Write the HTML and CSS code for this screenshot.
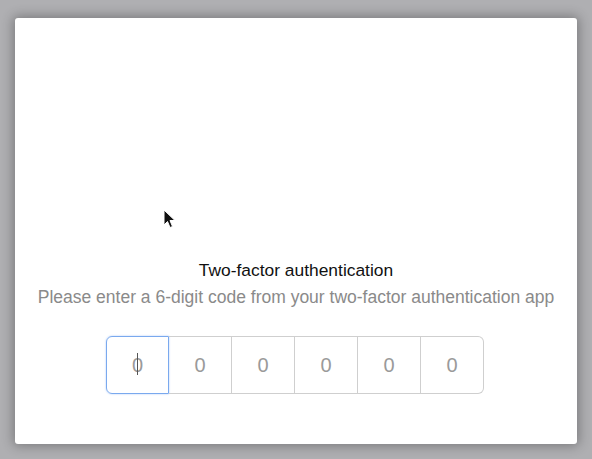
FILE: index.html
```html
<!DOCTYPE html>
<html lang="en">
<head>
  <meta charset="UTF-8">
  <meta name="viewport" content="width=device-width, initial-scale=1.0">
  <title>Two-factor authentication</title>
  <link rel="stylesheet" href="styles.css">
</head>
<body>
  <div class="card">
    <svg class="pointer" width="14" height="20" viewBox="0 0 14 20">
      <path d="M1 1 L1 16 L4.5 12.5 L7 18.5 L9.5 17.5 L7 11.5 L12 11.5 Z" fill="#111" stroke="#fff" stroke-width="1"/>
    </svg>
    <h2 class="title">Two-factor authentication</h2>
    <p class="subtitle">Please enter a 6-digit code from your two-factor authentication app</p>
    <div class="code">
      <div class="digit active"><span>0</span><i class="caret"></i></div>
      <div class="digit"><span>0</span></div>
      <div class="digit"><span>0</span></div>
      <div class="digit"><span>0</span></div>
      <div class="digit"><span>0</span></div>
      <div class="digit"><span>0</span></div>
    </div>
  </div>
</body>
</html>
```

FILE: styles.css
```css
* {
  margin: 0px;
  padding: 0px;
  box-sizing: border-box;
}

body {
  background-color: #afafb2;
  font-family: "Liberation Sans", Arial, sans-serif;
  height: 459px;
  overflow: hidden;
}

.card {
  position: relative;
  width: 562px;
  height: 426px;
  margin: 18px 0px 0px 15px;
  background-color: #fff;
  border-radius: 3px;
  box-shadow: 0px 0px 12px 2px rgba(0, 0, 0, 0.3);
  padding-top: 242px;
  text-align: center;
}

.pointer {
  position: absolute;
  left: 148px;
  top: 191px;
}

.title {
  font-size: 17.4px;
  font-weight: normal;
  color: #111;
  line-height: 20px;
}

.subtitle {
  margin-top: 7px;
  font-size: 17.5px;
  color: #8a8a8a;
  line-height: 20px;
}

.code {
  display: flex;
  justify-content: center;
  margin-top: 29px;
  margin-right: 2px;
}

.digit {
  position: relative;
  width: 63px;
  height: 58px;
  border: 1px solid #cfcfcf;
  border-left: none;
  display: flex;
  align-items: center;
  justify-content: center;
  font-size: 20px;
  color: #9a9a9a;
}

.digit:first-child {
  border-left: 1px solid #cfcfcf;
  border-radius: 6px 0px 0px 6px;
}

.digit:last-child {
  border-radius: 0px 6px 6px 0px;
}

.digit.active {
  border: 1px solid #7aa9ee;
  box-shadow: 0px 0px 2px #a9c7f5;
}

.caret {
  position: absolute;
  left: 30px;
  top: 16px;
  width: 1px;
  height: 22px;
  background-color: #555;
}
```
